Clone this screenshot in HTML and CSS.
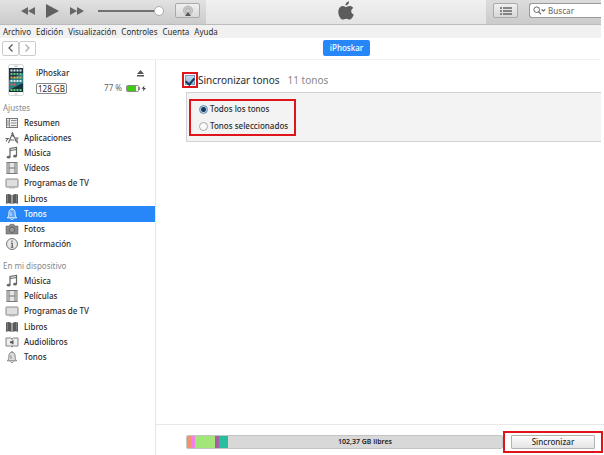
FILE: index.html
```html
<!DOCTYPE html>
<html lang="es">
<head>
    <meta charset="UTF-8">
    <title>iPhoskar - Tonos</title>
    <link rel="stylesheet" href="styles.css">
</head>
<body>

<!-- Iconos reutilizados -->
<svg class="sprite" aria-hidden="true">
    <symbol id="musica" viewBox="0 0 14 14">
        <path d="M5 11V2.500L11.500 1.500V10M5 4.500L11.500 3.500" fill="none" stroke="#666" stroke-width="1.200"/>
        <ellipse cx="3.600" cy="11.200" rx="1.800" ry="1.400" fill="#666"/>
        <ellipse cx="10" cy="10.200" rx="1.800" ry="1.400" fill="#666"/>
    </symbol>
    <symbol id="pelicula" viewBox="0 0 14 14">
        <rect x="2" y="1.500" width="10" height="11" fill="#e4e4e4" stroke="#777"/>
        <path d="M4 1.500V12.500M10 1.500V12.500" stroke="#777" fill="none"/>
        <path d="M4 7H10" stroke="#777"/>
    </symbol>
    <symbol id="tv" viewBox="0 0 14 14">
        <rect x="1" y="3" width="12" height="8" rx="0.500" fill="#dedede" stroke="#888"/>
        <path d="M4 12H10" stroke="#aaa" stroke-width="0.800"/>
    </symbol>
    <symbol id="libros" viewBox="0 0 14 14">
        <path d="M1 2.500Q4 1.500 6.600 3V12Q4 10.700 1 11.700ZM7.400 3Q10 1.500 13 2.500V11.700Q10 10.700 7.400 12Z" fill="#5a5a5a"/>
        <path d="M2.400 3V10.500M11.600 3V10.500" stroke="#aaa" stroke-width="0.500"/>
    </symbol>
    <symbol id="campana" viewBox="0 0 14 14">
        <path d="M7 1V2.200M2.300 10.800C3.800 9.800 3.800 8 3.900 6C4 3.500 5.200 2.200 7 2.200S10 3.500 10.100 6C10.200 8 10.200 9.800 11.700 10.800Z" fill="currentColor" fill-opacity="0.250" stroke="currentColor" stroke-width="0.900"/>
        <path d="M5.300 11.500Q7 14 8.700 11.500M6 9V5.500" fill="none" stroke="currentColor" stroke-width="0.800"/>
    </symbol>
</svg>

<header class="barra">
    <div class="reproductor">
        <button class="icono-boton" aria-label="Anterior"><svg width="14" height="8" viewBox="0 0 14 8"><path d="M7 0V8L0 4ZM14 0V8L7 4Z" fill="#666"/></svg></button>
        <button class="icono-boton" aria-label="Reproducir"><svg width="13" height="14" viewBox="0 0 13 14"><path d="M0 0L13 7L0 14Z" fill="#606060"/></svg></button>
        <button class="icono-boton" aria-label="Siguiente"><svg width="14" height="8" viewBox="0 0 14 8"><path d="M0 0L7 4L0 8ZM7 0L14 4L7 8Z" fill="#666"/></svg></button>
        <input class="volumen" type="range" min="0" max="100" value="100" aria-label="Volumen">
        <button class="boton-barra" aria-label="AirPlay">
            <svg width="12" height="12" viewBox="0 0 12 12"><circle cx="6" cy="5.500" r="4.500" fill="#ccc" stroke="#aaa" stroke-width="0.800"/><circle cx="6" cy="5.500" r="2.500" fill="none" stroke="#aaa" stroke-width="0.800"/><path d="M6 7L9 11H3Z" fill="#555"/></svg>
        </button>
    </div>
    <div class="pantalla">
        <svg width="16" height="19" viewBox="0 0 16 19"><path d="M11 0.300C11.200 2.600 9.400 4.600 7.500 4.600C7.200 2.500 9.100 0.500 11 0.300ZM7.900 6.100C8.700 6.100 9.700 4.900 11.500 4.900C12.900 4.900 14.300 5.500 15.200 6.900C12.300 8.700 12.700 12.300 15.800 13.500C15.100 15.500 13.500 18.500 11.700 18.600C10.300 18.600 9.900 17.700 8.200 17.700C6.500 17.700 6 18.600 4.700 18.600C2.500 18.600 0.300 14.500 0.300 11C0.300 7 2.700 5 5 5C6.400 5 7.300 6.100 7.900 6.100Z" fill="#5c5c5c"/></svg>
    </div>
    <div class="herramientas">
        <button class="boton-barra" aria-label="Lista">
            <svg width="12" height="8" viewBox="0 0 12 8"><path d="M0 1H2M0 4H2M0 7H2M3 1H12M3 4H12M3 7H12" stroke="#666" stroke-width="1.400"/></svg>
        </button>
        <label class="buscador">
            <svg width="13" height="9" viewBox="0 0 13 9"><circle cx="3.700" cy="3.700" r="2.800" fill="none" stroke="#666"/><path d="M5.700 5.700L8 8.300" stroke="#666" stroke-width="1.200"/><path d="M8.500 3.500L10.300 5L12.200 3.500" fill="none" stroke="#666" stroke-width="1.200"/></svg>
            <input type="text" placeholder="Buscar" aria-label="Buscar">
        </label>
    </div>
</header>

<nav class="menu">
    <a href="#">Archivo</a>
    <a href="#">Edición</a>
    <a href="#">Visualización</a>
    <a href="#">Controles</a>
    <a href="#">Cuenta</a>
    <a href="#">Ayuda</a>
</nav>

<div class="navegacion">
    <div class="flechas">
        <button aria-label="Atrás"><svg width="5" height="8" viewBox="0 0 5 8"><path d="M4.500 0.500L1 4L4.500 7.500" fill="none" stroke="#555" stroke-width="1.200"/></svg></button>
        <button aria-label="Adelante"><svg width="5" height="8" viewBox="0 0 5 8"><path d="M0.500 0.500L4 4L0.500 7.500" fill="none" stroke="#aaa" stroke-width="1.200"/></svg></button>
    </div>
    <button class="dispositivo-activo">iPhoskar</button>
</div>

<div class="contenido">

    <!-- Barra lateral -->
    <aside class="lateral">
        <div class="dispositivo">
            <svg width="16" height="32" viewBox="0 0 16 32">
                <rect x="0.500" y="0.500" width="15" height="31" rx="2" fill="#fff" stroke="#d4d4d4"/>
                <path d="M6 2.200H10" stroke="#999" stroke-width="0.700"/>
                <rect x="1" y="4" width="14" height="24" fill="#173240"/>
                <path d="M1 16L15 9V19L1 26Z" fill="#2b8285"/>
                <path d="M2.500 6.500H13.500" stroke="#e9eff0" stroke-width="2" stroke-dasharray="2 1"/>
                <path d="M2.500 10H13.500" stroke="#6fc58b" stroke-width="2" stroke-dasharray="2 1"/>
                <path d="M2.500 13.500H13.500" stroke="#e8ab55" stroke-width="2" stroke-dasharray="2 1"/>
                <path d="M2.500 17H13.500" stroke="#dfe8ea" stroke-width="2" stroke-dasharray="2 1"/>
                <path d="M2.500 20.500H8" stroke="#e05d5d" stroke-width="2" stroke-dasharray="2 1"/>
                <path d="M2.500 26H13.500" stroke="#6bd070" stroke-width="2" stroke-dasharray="2 1"/>
                <circle cx="8" cy="29.700" r="1" fill="none" stroke="#aaa" stroke-width="0.500"/>
            </svg>
            <div class="datos">
                <div class="linea">
                    <span>iPhoskar</span>
                    <button class="icono-boton" aria-label="Expulsar"><svg width="7" height="7" viewBox="0 0 7 7"><path d="M3.500 0L7 4H0ZM0 5H7V6.500H0Z" fill="#555"/></svg></button>
                </div>
                <div class="linea">
                    <span class="capacidad">128 GB</span>
                    <span class="bateria">77 %
                        <svg width="20" height="7" viewBox="0 0 20 7"><rect x="0.500" y="0.500" width="12" height="6" rx="1" fill="#fff" stroke="#888"/><rect x="1" y="1" width="9" height="5" fill="#3dcc10"/><path d="M13.500 2V5" stroke="#888"/><path d="M18.500 0.500L15.500 3.700H17.500L16.700 6.500L20 3H18Z" fill="#444"/></svg>
                    </span>
                </div>
            </div>
        </div>

        <h2>Ajustes</h2>
        <ul class="lista ajustes">
            <li><a href="#"><svg viewBox="0 0 14 14"><rect x="1.500" y="2.500" width="11" height="9" fill="#eee" stroke="#777"/><path d="M4.500 2.500V11.500M6 4.500H11.500M6 7H11.500M6 9.500H11.500M2 5H4M2 7H4M2 9H4" stroke="#777" stroke-width="0.800"/></svg>Resumen</a></li>
            <li><a href="#"><svg viewBox="0 0 14 14"><path d="M3.500 12L7.500 2L10.800 9.500M6.500 2L8.500 6M4 9H9M0.500 7.500H4M1 10.500L3 7.500M10 7H13.500M12 7V11M10 9L13 12" fill="none" stroke="#666" stroke-width="1.100"/></svg>Aplicaciones</a></li>
            <li><a href="#"><svg><use href="#musica"/></svg>Música</a></li>
            <li><a href="#"><svg><use href="#pelicula"/></svg>Vídeos</a></li>
            <li><a href="#"><svg><use href="#tv"/></svg>Programas de TV</a></li>
            <li><a href="#"><svg><use href="#libros"/></svg>Libros</a></li>
            <li class="activo"><a href="#"><svg><use href="#campana"/></svg>Tonos</a></li>
            <li><a href="#"><svg viewBox="0 0 14 14"><path d="M1 4H4L5.200 2.300H8.800L10 4H13V12H1Z" fill="#888" stroke="#666" stroke-width="0.600"/><circle cx="7" cy="7.800" r="2.700" fill="#999" stroke="#666"/></svg>Fotos</a></li>
            <li><a href="#"><svg viewBox="0 0 14 14"><circle cx="7" cy="7" r="5.500" fill="#e8e8e8" stroke="#777"/><path d="M7 3.500V5M6 6.200H7.200V10M5.800 10.300H8.400" fill="none" stroke="#555" stroke-width="1.100"/></svg>Información</a></li>
        </ul>

        <h2>En mi dispositivo</h2>
        <ul class="lista en-dispositivo">
            <li><a href="#"><svg><use href="#musica"/></svg>Música</a></li>
            <li><a href="#"><svg><use href="#pelicula"/></svg>Películas</a></li>
            <li><a href="#"><svg><use href="#tv"/></svg>Programas de TV</a></li>
            <li><a href="#"><svg><use href="#libros"/></svg>Libros</a></li>
            <li><a href="#"><svg viewBox="0 0 14 14"><path d="M1 3H5.500L7 4L8.500 3H13V11H8.500L7 12L5.500 11H1Z" fill="#eee" stroke="#777" stroke-width="0.900"/><path d="M7 4V5M7 9.500V12" stroke="#777" stroke-width="0.800"/><path d="M5 6.300V8.300H6.500L8.500 9.500V5L6.500 6.300Z" fill="#555"/></svg>Audiolibros</a></li>
            <li><a href="#"><svg><use href="#campana"/></svg>Tonos</a></li>
        </ul>
    </aside>

    <main class="principal">
        <div class="titulo">
            <span class="marca marca-casilla"><input type="checkbox" id="sincronizar-tonos" checked></span>
            <label for="sincronizar-tonos">Sincronizar tonos</label>
            <span class="cuenta">11 tonos</span>
        </div>

        <section class="panel">
            <div class="marca opciones">
                <label><input type="radio" name="tonos" checked>Todos los tonos</label>
                <label><input type="radio" name="tonos">Tonos seleccionados</label>
            </div>
        </section>

        <footer class="pie">
            <div class="espacio">
                <span class="uso uso-naranja"></span>
                <span class="uso uso-rosa"></span>
                <span class="uso uso-verde"></span>
                <span class="uso uso-morado"></span>
                <span class="uso uso-turquesa"></span>
                <span class="libre">102,37 GB libres</span>
            </div>
            <div class="marca marca-boton"><button class="sincronizar">Sincronizar</button></div>
        </footer>
    </main>

</div>

</body>
</html>
```
FILE: styles.css
```css
* {
    box-sizing: border-box;
}

body {
    margin: 0;
    height: 100vh;
    display: flex;
    flex-direction: column;
    background: #fff;
    color: #2c2c2c;
    font-family: "Noto Sans", "Open Sans", sans-serif;
    font-size: 8px;
    font-weight: 500;
    line-height: 12px;
    overflow: hidden;
}

button, input {
    font: inherit;
    color: inherit;
    margin: 0;
}

button {
    padding: 0;
    display: flex;
    align-items: center;
    justify-content: center;
}

a {
    color: inherit;
    text-decoration: none;
}

svg {
    display: block;
    flex: none;
}

.sprite {
    position: absolute;
    width: 0;
    height: 0;
}

/* Barra superior */
.barra {
    display: flex;
    height: 25px;
    margin-right: 3px;
    border-bottom: 1px solid #bcbcbc;
    flex: none;
}

.reproductor {
    display: flex;
    align-items: center;
    width: 206px;
    padding: 0 7px 3px 21px;
    gap: 11px;
    background: linear-gradient(#e2e2e2, #cbcbcb);
}

.icono-boton {
    border: 0;
    background: none;
}

.volumen {
    appearance: none;
    width: 66px;
    height: 10px;
    margin-left: 3px;
    background: linear-gradient(#707070, #707070) center / 100% 2px no-repeat;
}

.volumen::-webkit-slider-thumb {
    appearance: none;
    width: 10px;
    height: 10px;
    border: 1px solid #aaa;
    border-radius: 50%;
    background: #fff;
}

.boton-barra {
    width: 25px;
    height: 15px;
    border: 1px solid #aaa;
    border-radius: 2px;
    background: linear-gradient(#f0f0f0, #d8d8d8);
    flex: none;
}

.pantalla {
    flex: 1;
    display: flex;
    justify-content: center;
    align-items: flex-start;
    padding-top: 1px;
    background: linear-gradient(#f0f0f0, #e4e4e4);
}

.herramientas {
    display: flex;
    align-items: center;
    width: 115px;
    padding: 0 0 3px 7px;
    gap: 11px;
    background: linear-gradient(#dcdcdc, #cbcbcb);
}

.buscador {
    display: flex;
    align-items: center;
    flex: 1;
    min-width: 0;
    height: 15px;
    padding-left: 3px;
    gap: 2px;
    border: 1px solid #999;
    border-right: 0;
    border-radius: 3px 0 0 3px;
    background: #fff;
}

.buscador input {
    width: 100%;
    min-width: 0;
    padding: 0;
    border: 0;
    background: none;
}

.buscador input::placeholder {
    color: #777;
}

/* Menú */
.menu {
    display: flex;
    align-items: center;
    height: 13px;
    padding-left: 3px;
    margin-right: 3px;
    gap: 5px;
    background: #f1f1f1;
    font-weight: 400;
    flex: none;
}

/* Flechas y dispositivo activo */
.navegacion {
    display: grid;
    grid-template-columns: 1fr auto 1fr;
    align-items: center;
    height: 22px;
    padding: 0 0 1px 2px;
    margin-right: 3px;
    border-bottom: 1px solid #f1f1f1;
    flex: none;
}

.flechas {
    display: flex;
}

.flechas button {
    width: 17px;
    height: 15px;
    border: 1px solid #ccc;
    border-radius: 2px;
    background: #fff;
}

.dispositivo-activo {
    width: 47px;
    height: 16px;
    margin-left: 90px;
    border: 0;
    border-radius: 2px;
    background: #2787f8;
    color: #fff;
}

.contenido {
    display: flex;
    flex: 1;
    min-height: 0;
}

/* Barra lateral */
.lateral {
    width: 156px;
    padding-top: 4px;
    border-right: 1px solid #e6e6e6;
    flex: none;
}

.dispositivo {
    display: flex;
    gap: 12px;
    padding: 0 9px 0 8px;
    height: 37px;
}

.datos {
    flex: 1;
    display: flex;
    flex-direction: column;
    gap: 3px;
    padding-top: 3px;
}

.linea {
    display: flex;
    justify-content: space-between;
    align-items: center;
}

.linea .icono-boton {
    padding-right: 2px;
}

.capacidad {
    padding: 0 1px;
    border: 1px solid #888;
    border-radius: 2px;
    font-weight: 400;
    line-height: 9px;
}

.bateria {
    display: flex;
    align-items: center;
    gap: 4px;
    color: #666;
    font-weight: 400;
}

.lateral h2 {
    margin: 0;
    padding-left: 3px;
    color: #888;
    font-size: 8px;
    font-weight: 400;
    line-height: 14px;
}

.lista {
    display: flex;
    flex-direction: column;
    margin: 0;
    padding: 0;
    list-style: none;
}

.ajustes {
    height: 137px;
    margin-bottom: 7px;
}

.en-dispositivo {
    height: 92px;
}

.lista li {
    flex: 1;
}

.lista a {
    display: flex;
    align-items: center;
    height: 100%;
    padding-left: 5px;
    gap: 5px;
}

.lista svg {
    width: 14px;
    height: 14px;
    color: #777;
}

.lista .activo {
    background: #2787f8;
    color: #fff;
}

.lista .activo svg {
    color: #fff;
}

/* Zona principal */
.principal {
    flex: 1;
    min-width: 0;
    display: flex;
    flex-direction: column;
    padding-top: 12px;
}

/* Recuadros rojos */
.marca {
    border: 2px solid #e0141b;
}

.titulo {
    display: flex;
    align-items: center;
    padding-left: 26px;
    font-size: 10px;
    font-weight: 400;
    line-height: 16px;
}

.marca-casilla {
    display: flex;
    padding: 1px;
}

.titulo input {
    appearance: none;
    display: flex;
    justify-content: center;
    width: 10px;
    height: 10px;
    border: 1px solid #7d9cbb;
    background: linear-gradient(#c6dcef, #8fb4d8);
}

.titulo input:checked::after {
    content: "";
    width: 4px;
    height: 7px;
    border: solid #173a5e;
    border-width: 0 2px 2px 0;
    transform: rotate(40deg);
}

.cuenta {
    margin-left: 8px;
    color: #888;
}

.panel {
    margin: 4px 3px 0 30px;
    padding: 6px 2px 5px;
    border: 1px solid #d2d2d2;
    border-right: 0;
    background: #f3f3f3;
}

.opciones {
    display: flex;
    flex-direction: column;
    gap: 5px;
    width: 107px;
    padding: 2px 8px;
}

.opciones label {
    display: flex;
    align-items: center;
    gap: 2px;
    white-space: nowrap;
}

.opciones input {
    appearance: none;
    width: 9px;
    height: 9px;
    border: 1px solid #aaa;
    border-radius: 50%;
    background: #fafafa;
    flex: none;
}

.opciones input:checked {
    border-color: #6c8cab;
    background: radial-gradient(circle, #173a5e 2px, #b4d3ee 3px);
}

/* Pie */
.pie {
    display: flex;
    align-items: flex-start;
    height: 31px;
    margin-top: auto;
    padding: 6px 1px 0 30px;
    border-top: 1px solid #e8e8e8;
}

.espacio {
    flex: 1;
    display: flex;
    height: 14px;
    margin-top: 4px;
    border: 1px solid #c4c4c4;
    border-radius: 2px;
    overflow: hidden;
    background: #d8d8d8;
}

.uso {
    width: 4px;
}

.uso-naranja {
    background: #f0936e;
}

.uso-rosa {
    background: #f57fe8;
}

.uso-verde {
    width: 20px;
    background: #a2e67a;
}

.uso-morado {
    background: #a85fa0;
}

.uso-turquesa {
    width: 9px;
    background: #27bd9f;
}

.libre {
    flex: 1;
    color: #222;
    font-size: 7px;
    font-weight: 600;
    text-align: center;
}

.marca-boton {
    padding: 2px 6px;
}

.sincronizar {
    width: 84px;
    height: 14px;
    border: 1px solid #b4b4b4;
    border-radius: 1px;
    background: linear-gradient(#fdfdfd, #e4e4e4);
}
```
